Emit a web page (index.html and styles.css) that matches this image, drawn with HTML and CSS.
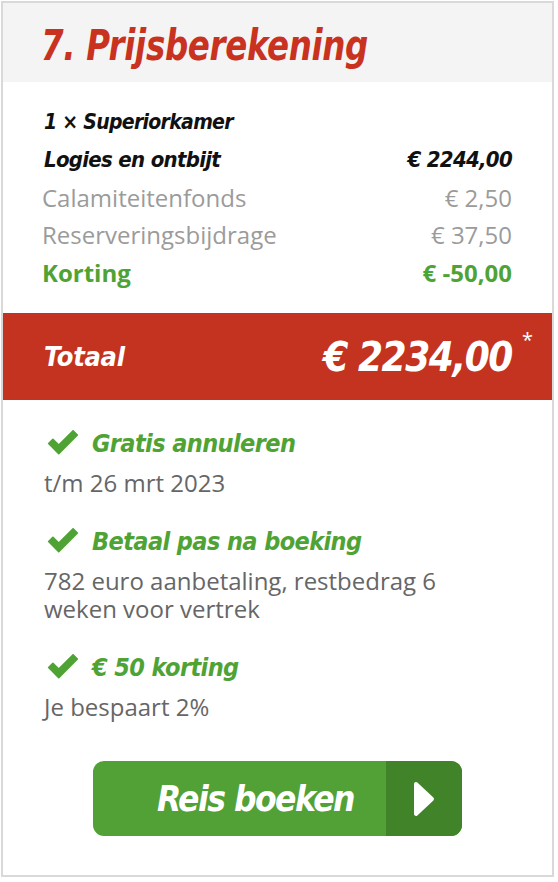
FILE: index.html
```html
<!DOCTYPE html>
<html lang="nl">
<head>
<meta charset="utf-8">
<link rel="stylesheet" href="styles.css">
</head>
<body>
<div class="card">
  <div class="header"><h2 class="title">7. Prijsberekening</h2></div>
  <div class="lines">
    <div class="room">1 × Superiorkamer</div>
    <div class="row strong"><span>Logies en ontbijt</span><span>€ 2244,00</span></div>
    <div class="row muted"><span>Calamiteitenfonds</span><span>€ 2,50</span></div>
    <div class="row muted"><span>Reserveringsbijdrage</span><span>€ 37,50</span></div>
    <div class="row discount"><span>Korting</span><span>€ -50,00</span></div>
  </div>
  <div class="total">
    <span class="total-label">Totaal</span>
    <span class="total-amount">€ 2234,00</span>
    <span class="star">*</span>
  </div>
  <div class="perks">
    <div class="perk">
      <div class="perk-title"><svg class="check" viewBox="0 0 32 24"><path d="M2.5 12.5 L6.5 8.5 L12 14 L25.5 0.5 L29.5 4.5 L12 22 Z" fill="#4fa335" stroke="#4fa335" stroke-width="1.5" stroke-linejoin="round"/></svg><span>Gratis annuleren</span></div>
      <div class="perk-text">t/m 26 mrt 2023</div>
    </div>
    <div class="perk">
      <div class="perk-title"><svg class="check" viewBox="0 0 32 24"><path d="M2.5 12.5 L6.5 8.5 L12 14 L25.5 0.5 L29.5 4.5 L12 22 Z" fill="#4fa335" stroke="#4fa335" stroke-width="1.5" stroke-linejoin="round"/></svg><span>Betaal pas na boeking</span></div>
      <div class="perk-text">782 euro aanbetaling, restbedrag 6 weken voor vertrek</div>
    </div>
    <div class="perk">
      <div class="perk-title"><svg class="check" viewBox="0 0 32 24"><path d="M2.5 12.5 L6.5 8.5 L12 14 L25.5 0.5 L29.5 4.5 L12 22 Z" fill="#4fa335" stroke="#4fa335" stroke-width="1.5" stroke-linejoin="round"/></svg><span>€ 50 korting</span></div>
      <div class="perk-text">Je bespaart 2%</div>
    </div>
  </div>
  <div class="actions">
    <button class="book"><span class="book-label">Reis boeken</span><span class="book-arrow"><svg viewBox="0 0 22 36" width="22" height="36"><path d="M3 3 L19 18 L3 33 Z" fill="#fff" stroke="#fff" stroke-width="4" stroke-linejoin="round"/></svg></span></button>
  </div>
</div>
</body>
</html>
```

FILE: styles.css
```css
* { box-sizing: border-box; }
html, body { margin: 0; padding: 0; background: #fff; }
body { padding: 1px 0 0 1px; font-family: "Open Sans", "Liberation Sans", sans-serif; }

.card {
  width: 553px;
  height: 876px;
  border: 2px solid #d9d9d9;
  background: #fff;
}

.header {
  background: #f4f4f4;
  height: 79px;
  padding: 18px 0 0 38px;
}
.title {
  display: inline-block;
  margin: 0;
  font-family: "DejaVu Sans Condensed", "DejaVu Sans", sans-serif;
  font-weight: bold;
  font-style: italic;
  font-size: 43px;
  line-height: 48px;
  color: #c8321f;
  letter-spacing: -0.4px;
  transform: scaleX(0.84);
  transform-origin: left center;
}

.lines { padding: 21px 40px 0 39px; }
.room, .row.strong {
  font-family: "DejaVu Sans Condensed", "DejaVu Sans", sans-serif;
  font-weight: bold;
  font-style: italic;
  color: #111;
  letter-spacing: -0.7px;
}
.room { font-size: 21px; line-height: 38px; height: 38px; padding-left: 2px; }
.row { display: flex; justify-content: space-between; height: 37.5px; align-items: center; }
.row.strong { font-size: 22px; padding-left: 2px; }
.row.muted { font-size: 24px; color: #9b9b9b; }
.row.discount { font-size: 24px; font-weight: 700; color: #4fa335; }

.total {
  margin-top: 22px;
  height: 87px;
  background: #c4331f;
  color: #fff;
  display: flex;
  align-items: center;
  padding: 0 0 0 41px;
  position: relative;
  font-family: "DejaVu Sans Condensed", "DejaVu Sans", sans-serif;
  font-weight: bold;
  font-style: italic;
}
.total-label { font-size: 27px; flex: 1; letter-spacing: -0.3px; }
.total-amount { font-size: 40px; margin-right: 40px; letter-spacing: -1.4px; }
.star {
  position: absolute;
  right: 19px;
  top: 13px;
  font-family: "Open Sans", sans-serif;
  font-style: normal;
  font-weight: 400;
  font-size: 20px;
}

.perks { padding: 23px 40px 0 43px; }
.perk { margin-bottom: 24px; }
.perk-title {
  display: flex;
  align-items: center;
  gap: 12px;
  height: 40px;
  color: #4fa335;
  font-family: "DejaVu Sans Condensed", "DejaVu Sans", sans-serif;
  font-weight: bold;
  font-style: italic;
  font-size: 25px;
  letter-spacing: -0.6px;
}
.check { width: 34px; height: 26px; flex: none; }
.perk-text {
  margin: 6px 0 0 -2px;
  font-size: 24px;
  line-height: 28px;
  color: #666;
  width: 430px;
}

.actions { display: flex; padding: 16px 0 0 90px; }
.book {
  display: flex;
  width: 369px;
  height: 75px;
  padding: 0;
  border: 0;
  border-radius: 11px;
  overflow: hidden;
  background: #52a136;
  color: #fff;
  font-family: "DejaVu Sans Condensed", "DejaVu Sans", sans-serif;
  font-weight: bold;
  font-style: italic;
}
.book-label {
  flex: 1;
  display: flex;
  align-items: center;
  justify-content: center;
  padding-left: 32px;
  font-size: 35px;
  letter-spacing: -1.5px;
}
.book-arrow {
  width: 76px;
  background: #418328;
  display: flex;
  align-items: center;
  justify-content: center;
}
```
